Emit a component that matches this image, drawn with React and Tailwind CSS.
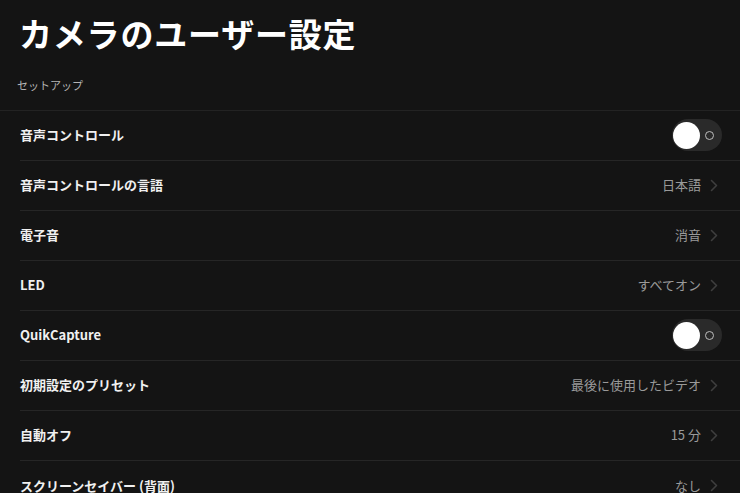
const FONT = {
  fontFamily: '"Noto Sans CJK JP", "Noto Sans", sans-serif',
};

const ROWS = [
  { label: "音声コントロール", toggle: true },
  { label: "音声コントロールの言語", value: "日本語" },
  { label: "電子音", value: "消音" },
  { label: "LED", value: "すべてオン" },
  { label: "QuikCapture", toggle: true },
  { label: "初期設定のプリセット", value: "最後に使用したビデオ" },
  { label: "自動オフ", value: "15 分" },
  { label: "スクリーンセイバー (背面)", value: "なし" },
];

function Toggle() {
  return (
    <div className="w-[50px] h-[32px] rounded-full bg-[#2a2a2a] flex items-center px-[1px] relative">
      <div className="w-[27px] h-[27px] rounded-full bg-white" />
      <div className="absolute right-[8px] top-[12px] w-[9px] h-[9px] rounded-full border-[1.5px] border-[#bdbdbd]" />
    </div>
  );
}

function Chevron() {
  return (
    <svg width="8" height="13" viewBox="0 0 8 13" className="ml-[9px]">
      <path
        d="M1.5 1.5 L6.5 6.5 L1.5 11.5"
        fill="none"
        stroke="#3e3e3e"
        strokeWidth="1.6"
        strokeLinecap="round"
        strokeLinejoin="round"
      />
    </svg>
  );
}

export default function App() {
  return (
    <div
      className="w-[740px] h-[493px] overflow-hidden bg-[#141414] text-white"
      style={FONT}
    >
      <h1 className="pl-[19px] pt-[8px] h-[50px] text-[33px] font-bold leading-[50px] tracking-[0.8px]">
        カメラのユーザー設定
      </h1>
      <p className="pl-[17px] pt-[27px] text-[11px] leading-[16px] text-[#b4b4b4] h-[60px]">
        セットアップ
      </p>
      <div className="border-t border-[#232323]">
        {ROWS.map((r, i) => (
          <div key={r.label} className="pl-[20px]">
            <div
              className={`h-[50px] flex items-center justify-between pr-[18px] pb-[1px] ${
                i < ROWS.length - 1 ? "border-b border-[#262626]" : ""
              }`}
            >
              <span className="text-[13px] font-bold text-[#f0f0f0]">
                {r.label}
              </span>
              {r.toggle ? (
                <Toggle />
              ) : (
                <span className="flex items-center text-[13px] text-[#9a9a9a] pr-[4px]">
                  {r.value}
                  <Chevron />
                </span>
              )}
            </div>
          </div>
        ))}
      </div>
    </div>
  );
}
